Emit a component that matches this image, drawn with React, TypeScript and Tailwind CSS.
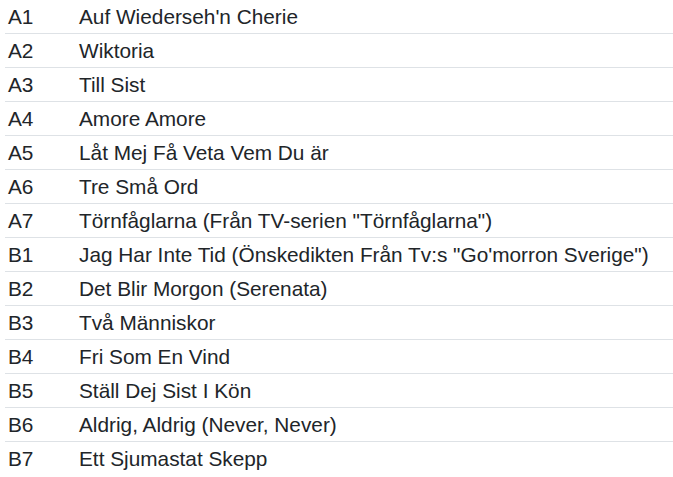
import React from "react";

const rows: [string, string][] = [
  ["A1", "Auf Wiederseh'n Cherie"],
  ["A2", "Wiktoria"],
  ["A3", "Till Sist"],
  ["A4", "Amore Amore"],
  ["A5", "Låt Mej Få Veta Vem Du är"],
  ["A6", "Tre Små Ord"],
  ["A7", 'Törnfåglarna (Från TV-serien "Törnfåglarna")'],
  ["B1", 'Jag Har Inte Tid (Önskedikten Från Tv:s "Go\'morron Sverige")'],
  ["B2", "Det Blir Morgon (Serenata)"],
  ["B3", "Två Människor"],
  ["B4", "Fri Som En Vind"],
  ["B5", "Ställ Dej Sist I Kön"],
  ["B6", "Aldrig, Aldrig (Never, Never)"],
  ["B7", "Ett Sjumastat Skepp"],
];

export default function App() {
  return (
    <div className="bg-white w-[673px] h-[477px] overflow-hidden pl-[5px] font-['Liberation_Sans',Arial,sans-serif] text-[20.8px] text-[#212529]">
      <table className="w-[668px] border-collapse">
        <tbody>
          {rows.map(([pos, title], i) => (
            <tr key={pos} className={i < rows.length - 1 ? "border-b border-[#dee2e6]" : ""}>
              <td className="w-[74px] px-[3px] py-[3px] leading-[27px] align-top">{pos}</td>
              <td className="px-0 py-[3px] leading-[27px] align-top whitespace-nowrap">{title}</td>
            </tr>
          ))}
        </tbody>
      </table>
    </div>
  );
}
